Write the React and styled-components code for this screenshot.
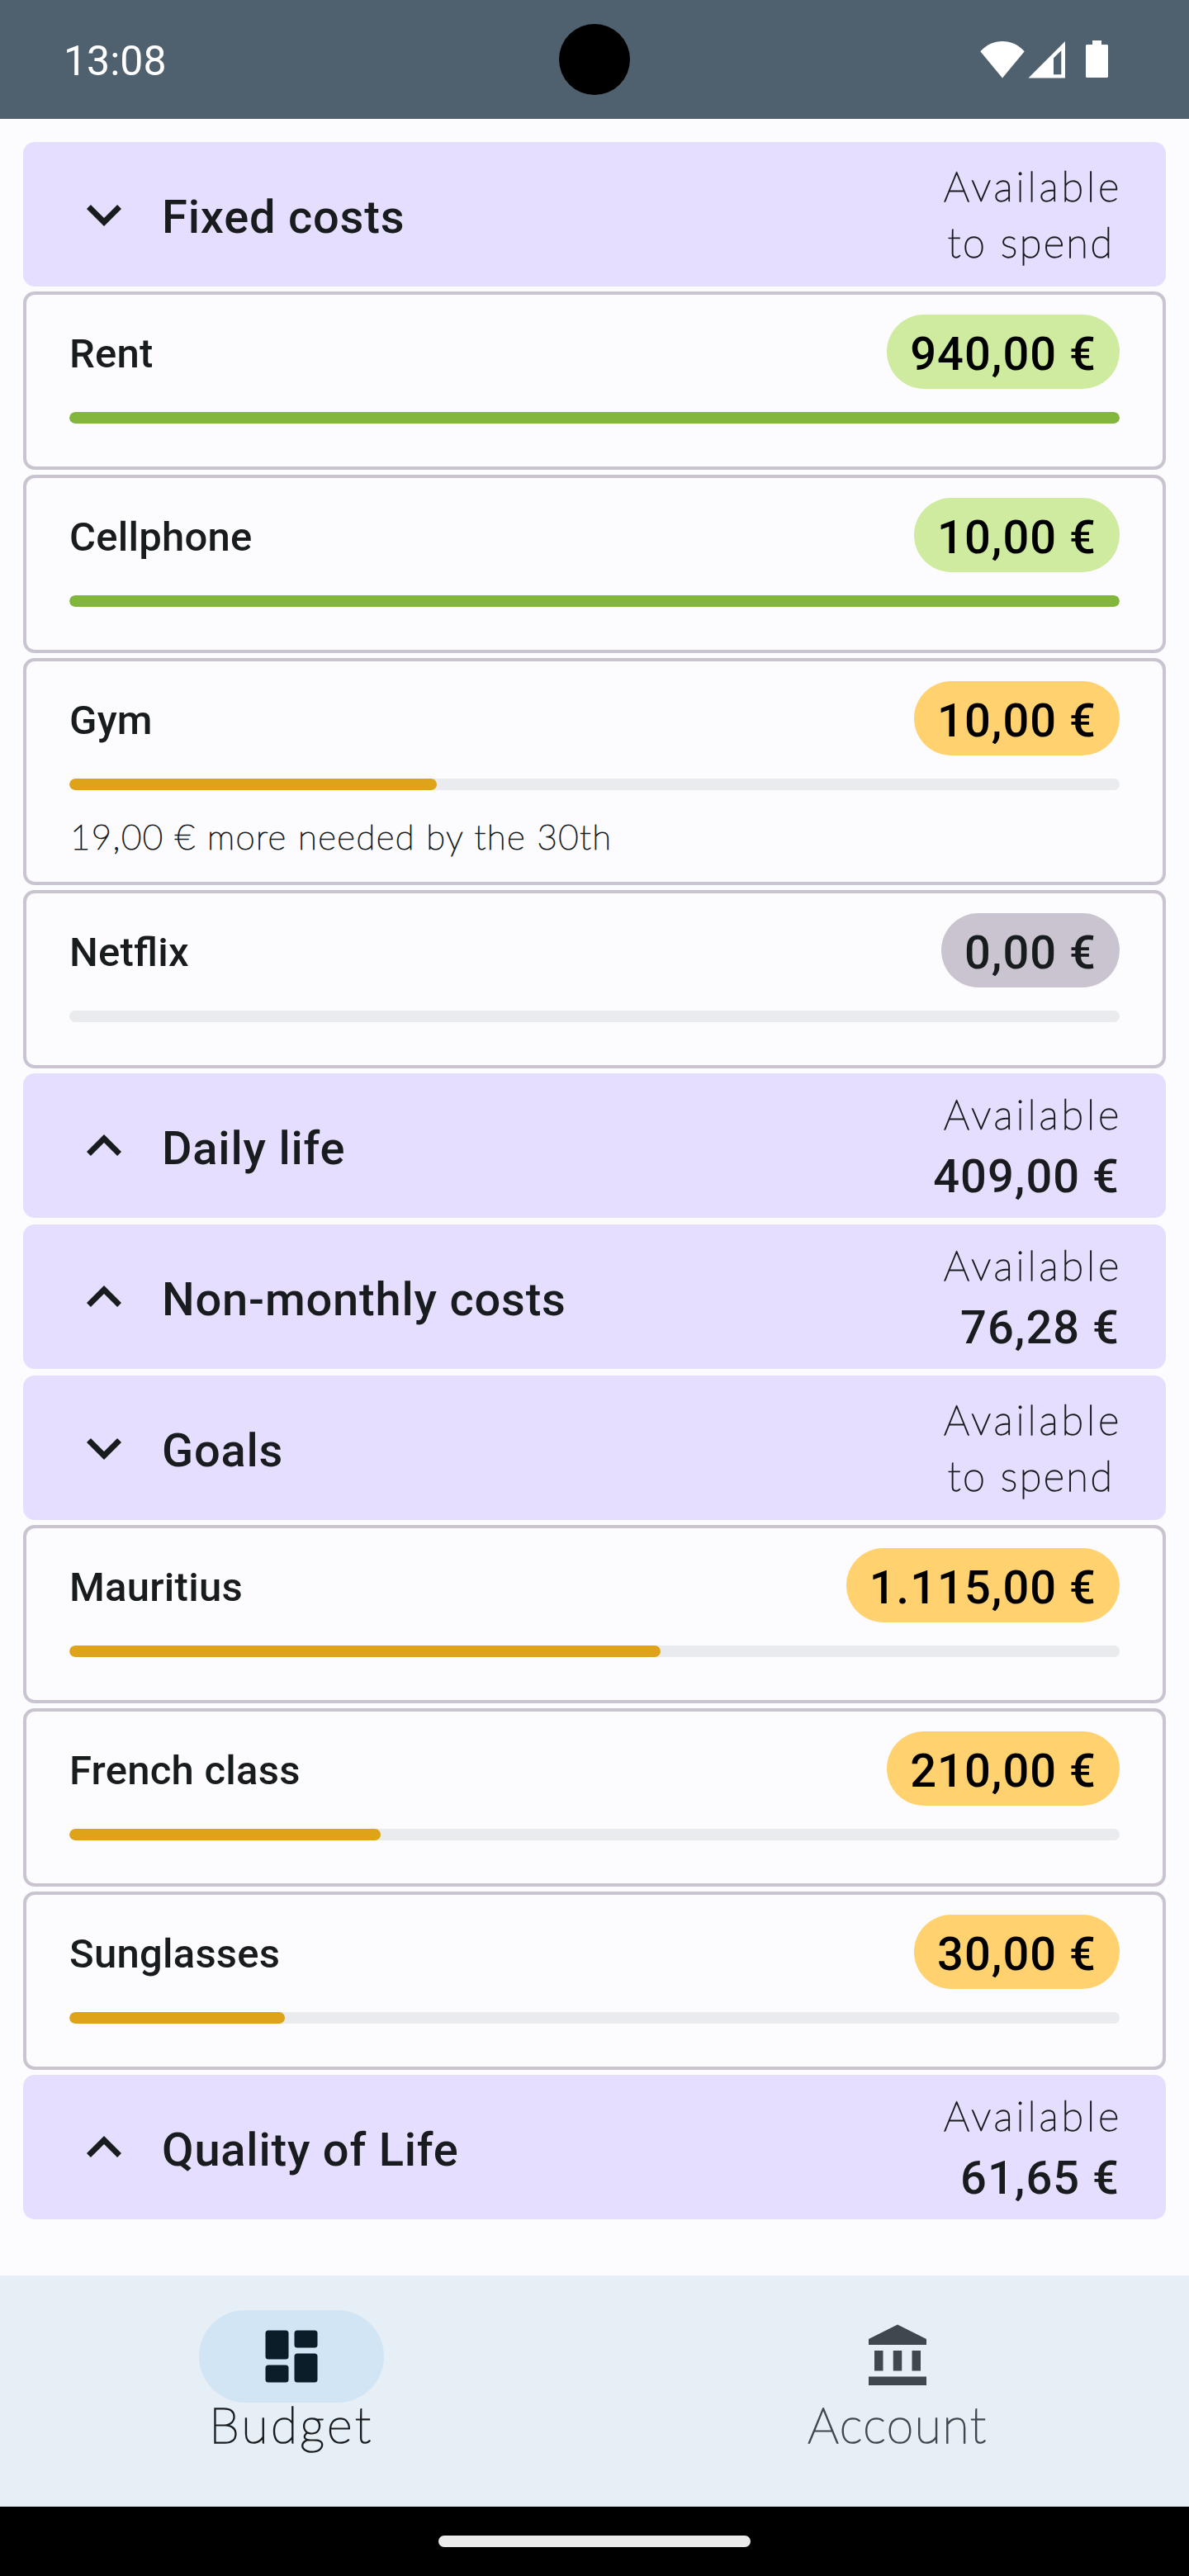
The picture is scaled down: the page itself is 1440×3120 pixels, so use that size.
import React from "react";
import styled, { createGlobalStyle } from "styled-components";

const GlobalStyle = createGlobalStyle`
  * { box-sizing: border-box; }
  body { margin: 0; background: #fcfcff; }
`;

const ink = "#191c1e";
const tones = {
  green: { pill: "#ceeb9f", bar: "#82b63d", text: "#000000" },
  amber: { pill: "#ffd26f", bar: "#dfa319", text: "#000000" },
  grey: { pill: "#cac4d0", bar: "transparent", text: ink },
};

const Screen = styled.div`
  display: flex;
  flex-direction: column;
  width: 1440px;
  height: 3120px;
  background: #fcfcff;
  color: ${ink};
  font-family: Roboto, "Liberation Sans", sans-serif;
`;

const StatusBar = styled.header`
  position: relative;
  display: flex;
  align-items: center;
  justify-content: space-between;
  height: 144px;
  padding: 0 98px 0 77px;
  background: #4f616e;
  color: #ffffff;
`;

const Clock = styled.span`
  padding-top: 4px;
  font-size: 50px;
  line-height: 60px;
`;

const Camera = styled.div`
  position: absolute;
  top: 29px;
  left: 677px;
  width: 86px;
  height: 86px;
  border-radius: 50%;
  background: #000000;
`;

const StatusIcons = styled.div`
  display: flex;
  align-items: center;

  svg { display: block; height: 46px; fill: #ffffff; }
  svg + svg { margin-left: 4px; }
  svg:last-child { margin-left: 25px; }
`;

const List = styled.main`
  display: flex;
  flex-direction: column;
  gap: 6px;
  flex: 1;
  padding: 28px;
`;

const GroupStack = styled.div`
  display: flex;
  flex-direction: column;
  gap: 8px;
`;

const GroupHeader = styled.button`
  display: flex;
  align-items: center;
  width: 100%;
  height: 175px;
  padding: 0 56px;
  border: 0;
  border-radius: 14px;
  background: #e5deff;
  color: inherit;
  font: inherit;
  text-align: left;
`;

const Chevron = styled.svg`
  display: block;
  width: 84px;
  height: 84px;
  fill: ${ink};
`;

const GroupTitle = styled.span`
  flex: 1;
  padding: 6px 0 0 28px;
  font-size: 56px;
  font-weight: 500;
  letter-spacing: 0.8px;
  line-height: 84px;
`;

const Summary = styled.span`
  display: flex;
  flex-direction: column;
  align-items: ${(p) => (p.$open ? "center" : "flex-end")};
  align-self: flex-start;
  padding-top: ${(p) => (p.$open ? 19 : 15)}px;
`;

const Thin = styled.span`
  font-family: Lato, "Open Sans", sans-serif;
  font-weight: 100;
  -webkit-text-stroke: 0.028em currentColor;
  white-space: nowrap;
`;

const Caption = styled(Thin)`
  margin-right: ${(p) => p.$shift || 0}px;
  font-size: 49px;
  line-height: 68px;
  letter-spacing: ${(p) => p.$track}px;
`;

const Amount = styled.span`
  font-size: 56px;
  font-weight: 500;
  letter-spacing: 1.05px;
  line-height: 84px;
  white-space: nowrap;
`;

const Card = styled.article`
  display: flex;
  flex-direction: column;
  height: ${(p) => (p.$tall ? 275 : 216)}px;
  padding: 24px 52px 0;
  border: 4px solid #c9c4d0;
  border-radius: 14px;
`;

const CardRow = styled.div`
  display: flex;
  align-items: center;
  justify-content: space-between;
  height: 90px;
`;

const ItemName = styled.span`
  padding-top: 6px;
  font-size: 49px;
  font-weight: 500;
  font-feature-settings: "liga" 1;
  letter-spacing: 0.25px;
  line-height: 70px;
`;

const Pill = styled.span`
  height: 90px;
  padding: 6px 28px 0;
  border-radius: 45px;
  background: ${(p) => tones[p.$tone].pill};
  color: ${(p) => tones[p.$tone].text};
  font-size: 56px;
  font-weight: 500;
  letter-spacing: 1.05px;
  line-height: 84px;
  white-space: nowrap;
`;

const Track = styled.div`
  flex: none;
  height: 14px;
  margin-top: 28px;
  border-radius: 7px;
  background: #eaebee;
  overflow: hidden;
`;

const Fill = styled.div`
  height: 100%;
  border-radius: 7px;
  background: ${(p) => tones[p.$tone].bar};
`;

const Note = styled(Thin)`
  margin-top: 28px;
  padding-left: 1px;
  font-size: 42px;
  letter-spacing: 1.42px;
  line-height: 56px;
`;

const NavBar = styled.nav`
  display: flex;
  gap: 28px;
  height: 280px;
  padding-top: 42px;
  background: #e7eff6;
`;

const NavItem = styled.a`
  display: flex;
  flex: 1;
  flex-direction: column;
  align-items: center;
  color: ${(p) => (p.$active ? ink : "#41484d")};
`;

const Indicator = styled.span`
  display: flex;
  align-items: center;
  justify-content: center;
  width: 224px;
  height: 112px;
  border-radius: 56px;
  background: ${(p) => (p.$active ? "#d2e5f5" : "transparent")};

  svg { width: 84px; height: 84px; fill: ${(p) => (p.$active ? "#0b1d29" : "#41484d")}; }
`;

const NavLabel = styled(Thin)`
  font-size: 59px;
  letter-spacing: ${(p) => p.$track}px;
  line-height: 54px;
`;

const GestureBar = styled.footer`
  display: flex;
  align-items: center;
  justify-content: center;
  height: 84px;
  background: #000000;
`;

const Handle = styled.div`
  width: 378px;
  height: 14px;
  border-radius: 7px;
  background: #ebebeb;
`;

function Group({ title, amount }) {
  const open = !amount;
  return (
    <GroupHeader>
      <Chevron viewBox="0 0 24 24">
        <path
          d={
            open
              ? "M16.59 8.59 12 13.17 7.41 8.59 6 10l6 6 6-6z"
              : "M12 8l-6 6 1.41 1.41L12 10.83l4.59 4.58L18 14z"
          }
        />
      </Chevron>
      <GroupTitle>{title}</GroupTitle>
      <Summary $open={open}>
        <Caption $track={3.8} $shift={-3}>Available</Caption>
        {open ? <Caption $track={2.4} $shift={2}>to spend</Caption> : <Amount>{amount}</Amount>}
      </Summary>
    </GroupHeader>
  );
}

function Item({ name, amount, tone, progress, note }) {
  return (
    <Card $tall={Boolean(note)}>
      <CardRow>
        <ItemName>{name}</ItemName>
        <Pill $tone={tone}>{amount}</Pill>
      </CardRow>
      <Track>
        <Fill $tone={tone} style={{ width: `${progress}%` }} />
      </Track>
      {note && <Note>{note}</Note>}
    </Card>
  );
}

export default function App() {
  return (
    <Screen>
      <GlobalStyle />
      <StatusBar>
        <Clock>13:08</Clock>
        <Camera />
        <StatusIcons>
          <svg width="54" viewBox="0 0 54 46">
            <path d="M27 45.5 0.3 13.3C7.5 5 17 1 27 1s19.500 4 26.700 12.300z" />
          </svg>
          <svg width="45" viewBox="0 0 45 46">
            <path fillRule="evenodd" d="M0.500 45.500 45 1v44.500zM31 21.300v20h9.300v-29z" />
          </svg>
          <svg width="27" viewBox="0 0 27 46">
            <path d="M8 0h11v5h7l1 1v38l-1 1H1l-1-1V6l1-1h7z" />
          </svg>
        </StatusIcons>
      </StatusBar>

      <List>
        <Group title="Fixed costs" />
        <Item name="Rent" amount="940,00 €" tone="green" progress={100} />
        <Item name="Cellphone" amount="10,00 €" tone="green" progress={100} />
        <Item name="Gym" amount="10,00 €" tone="amber" progress={35} note="19,00 € more needed by the 30th" />
        <Item name="Netflix" amount="0,00 €" tone="grey" progress={0} />
        <GroupStack>
          <Group title="Daily life" amount="409,00 €" />
          <Group title="Non-monthly costs" amount="76,28 €" />
          <Group title="Goals" />
        </GroupStack>
        <Item name="Mauritius" amount="1.115,00 €" tone="amber" progress={56.3} />
        <Item name="French class" amount="210,00 €" tone="amber" progress={29.6} />
        <Item name="Sunglasses" amount="30,00 €" tone="amber" progress={20.5} />
        <Group title="Quality of Life" amount="61,65 €" />
      </List>

      <NavBar>
        <NavItem $active>
          <Indicator $active>
            <svg viewBox="0 0 24 24">
              <rect x="3" y="3" width="8" height="10" rx="1" />
              <rect x="3" y="15" width="8" height="6" rx="1" />
              <rect x="13" y="3" width="8" height="6" rx="1" />
              <rect x="13" y="11" width="8" height="10" rx="1" />
            </svg>
          </Indicator>
          <NavLabel $track={3.4}>Budget</NavLabel>
        </NavItem>
        <NavItem>
          <Indicator>
            <svg viewBox="0 0 24 24">
              <path d="M12 1 2 6v2h20V6zM4 10h3v7H4zM10.500 10h3v7h-3zM17 10h3v7h-3zM2 19h20v3H2z" />
            </svg>
          </Indicator>
          <NavLabel $track={1.6}>Account</NavLabel>
        </NavItem>
      </NavBar>
      <GestureBar>
        <Handle />
      </GestureBar>
    </Screen>
  );
}
